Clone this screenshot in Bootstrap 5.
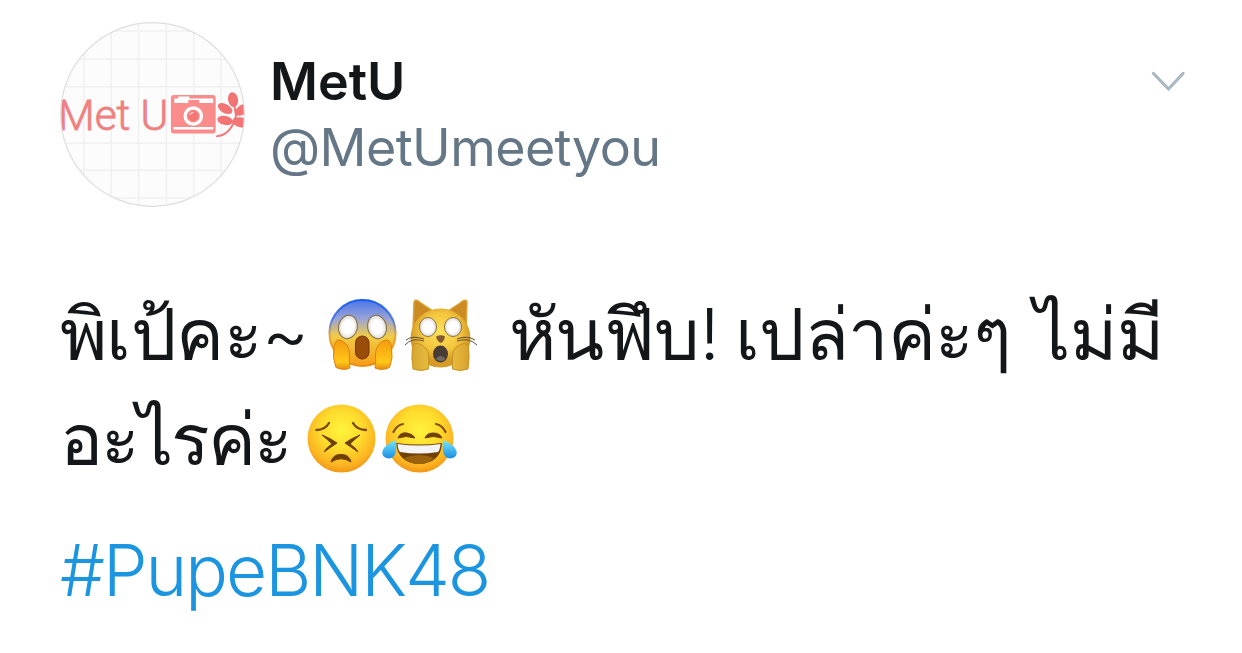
<!DOCTYPE html>
<html lang="th">
<head>
<meta charset="utf-8">
<meta name="viewport" content="width=device-width, initial-scale=1">
<title>MetU</title>
<link href="https://cdn.jsdelivr.net/npm/bootstrap@5.3.0/dist/css/bootstrap.min.css" rel="stylesheet">
<style>
body{font-family:Inter,"Liberation Sans",sans-serif;color:#14171a;background:#fff;overflow:hidden}
.tweet{padding:22px 57px 0 60px;height:653px}
.avatar{width:185px;height:185px;flex:none}
.who{padding:27px 0 0 25px;flex:1}
.display-name{font-size:52px;line-height:66px;font-weight:600;letter-spacing:0}
.handle{font-size:52px;line-height:66px;color:#657786;letter-spacing:-.6px}
.caret-icon{width:34px;height:22px;margin-top:49px}
.tweet-line{height:105px;line-height:105px;font-size:72px;white-space:nowrap}
.tweet-line > span{margin-top:-2px}
.message{padding-top:75px}
.w1{width:268px;letter-spacing:-.6px}.w2{width:226px;letter-spacing:-.6px}.w3{width:299px;letter-spacing:-.6px}.w4{letter-spacing:0}.w5{width:247px;letter-spacing:-2.3px}
.gap-after{margin-right:25px}
.emoji{width:78px;height:78px;flex:none;overflow:visible}
.hashtag{font-size:71px;line-height:90px;font-weight:300;color:#1b95e0;letter-spacing:-2px;margin-top:33px}
</style>
</head>
<body>
<article class="tweet">
<header class="d-flex align-items-start">
<svg class="avatar" viewBox="0 0 186 186" role="img" aria-label="MetU">
<defs><clipPath id="round"><circle cx="93" cy="93" r="92.5"/></clipPath></defs>
<g clip-path="url(#round)">
<rect width="186" height="186" fill="#fcfcfc"/>
<path d="M24 0V186M51.500 0V186M79 0V186M107 0V186M134.500 0V186M162 0V186M0 9H186M0 37.500H186M0 65H186M0 122H186M0 149H186M0 177H186" stroke="#f0f0f0" stroke-width="1.500" fill="none"/>
<text x="-2" y="109" font-family="Roboto,sans-serif" font-weight="300" font-size="43" textLength="111" lengthAdjust="spacingAndGlyphs" fill="#f08080" stroke="#f08080" stroke-width=".8">Met U</text>
<rect x="111.500" y="73.500" width="45" height="38.500" rx="3" fill="#fa8c8c"/>
<path d="M115 81.500v-4.500h4v-2h11v2h24v4.500h-14v-3h-11v3zM114 105.500h40v2.500h-40z" fill="#fff"/>
<circle cx="134" cy="94.500" r="8.200" fill="none" stroke="#fff" stroke-width="3.300"/><circle cx="134" cy="94.500" r="5" fill="#f67575"/><path d="M130.500 93.500q1-2.500 3.500-2.500" stroke="#fff" fill="none"/>
<path d="M157 115Q172 114 177 94L175 82" fill="none" stroke="#f17878" stroke-width="2"/>
<g fill="#f27474"><ellipse cx="174" cy="78" rx="5" ry="7.500" transform="rotate(-10 174 78)"/><ellipse cx="166" cy="87" rx="8" ry="4.500" transform="rotate(30 166 87)"/><ellipse cx="166" cy="99" rx="8" ry="4.500" transform="rotate(12 166 99)"/><ellipse cx="184" cy="88" rx="9" ry="5" transform="rotate(-30 184 88)"/><ellipse cx="182" cy="101" rx="9" ry="5" transform="rotate(12 182 101)"/></g>
</g>
<circle cx="93" cy="93" r="92.300" fill="none" stroke="#dedede" stroke-width="1.200"/>
</svg>
<div class="who"><div class="display-name">MetU</div><div class="handle">@MetUmeetyou</div></div>
<svg class="caret-icon" viewBox="0 0 34 22"><path d="M2.500 2.500 17.500 18 32 2.500" fill="none" stroke="#aab8c2" stroke-width="3.200" stroke-linecap="round"/></svg>
</header>
<div class="message">
<div class="tweet-line d-flex align-items-center">
<span class="w1">พิเป้คะ<span class="fw-light">~</span></span>
<svg class="emoji" viewBox="0 0 78 78" aria-label="😱">
<defs>
<linearGradient id="scream" x2="0" y2="1"><stop offset="0" stop-color="#4b76e8"/><stop offset=".28" stop-color="#98a2d8"/><stop offset=".55" stop-color="#f1cc48"/><stop offset="1" stop-color="#f79c15"/></linearGradient>
<linearGradient id="screamEdge" x2="0" y2="1"><stop offset="0" stop-color="#155cf2"/><stop offset=".32" stop-color="#5a82dd"/><stop offset=".55" stop-color="#eba930"/><stop offset="1" stop-color="#ed8a10"/></linearGradient>
<linearGradient id="hand" x2="0" y2="1"><stop offset="0" stop-color="#f39a10"/><stop offset=".75" stop-color="#ffc817"/><stop offset="1" stop-color="#e68a10"/></linearGradient>
<radialGradient id="eye"><stop offset=".55" stop-color="#fff"/><stop offset="1" stop-color="#dcdad8"/></radialGradient>
</defs>
<circle cx="34.500" cy="37" r="33" fill="url(#scream)" stroke="url(#screamEdge)" stroke-width="2.200"/>
<ellipse cx="20" cy="31" rx="9.400" ry="11.700" fill="url(#eye)" stroke="#806b38" stroke-width="1" transform="rotate(12 20 31)"/>
<ellipse cx="49" cy="31" rx="9.400" ry="11.700" fill="url(#eye)" stroke="#806b38" stroke-width="1" transform="rotate(-12 49 31)"/>
<rect x="27.500" y="40" width="13.500" height="23" rx="6.700" fill="#984e08" stroke="#733700"/>
<path d="M8 71.500Q4 62 6 51Q7 43 12 44Q21 47 21.500 58Q21 66 22 72Q16 75 8 71.500Z" fill="url(#hand)" stroke="#df830f"/>
<path d="M61.500 71.500Q65.500 62 63.500 51Q62.500 43 57.500 44Q48 47 47.500 58Q48 66 47 72Q54 75 61.500 71.500Z" fill="url(#hand)" stroke="#df830f"/>
</svg>
<svg class="emoji gap-after" viewBox="0 0 78 78" aria-label="🙀">
<defs><radialGradient id="cat" cx=".5" cy=".4"><stop offset="0" stop-color="#ffe35a"/><stop offset=".65" stop-color="#f3c53d"/><stop offset="1" stop-color="#d69b24"/></radialGradient>
<linearGradient id="paw"><stop offset="0" stop-color="#d5a62e"/><stop offset=".5" stop-color="#f4cc4f"/><stop offset="1" stop-color="#d7a12b"/></linearGradient></defs>
<path d="M7 33 8 6Q9 2 15 7L27 15ZM60 33 61 6Q60 2 54 7L42 15Z" fill="#cc8b22" stroke="#dda433" stroke-width="1.500"/>
<ellipse cx="34.500" cy="42" rx="30" ry="29.500" fill="url(#cat)"/>
<ellipse cx="22" cy="31" rx="8.500" ry="9.500" fill="url(#eye)" stroke="#8a7444"/><ellipse cx="47" cy="31" rx="8.500" ry="9.500" fill="url(#eye)" stroke="#8a7444"/>
<path d="M30 40.500Q35 38 39 40.500Q38 46 34.500 47Q31 45 30 40.500Z" fill="#855a32"/>
<ellipse cx="34.500" cy="58" rx="7.500" ry="8.500" fill="#493c35"/><path d="M29.500 63Q34.500 57 39.500 63Q36 67 29.500 63Z" fill="#706b67"/>
<path d="M7 73Q5 61 6.500 51Q8 46 13 48Q22 51 22.500 60V73Q15 76 7 73ZM62 73Q64 61 62.500 51Q61 46 56 48Q47 51 46.500 60V73Q54 76 62 73Z" fill="url(#paw)" stroke="#c89424"/>
<path d="M18 43Q7 39 0 44M18 45Q6 41-1 49M51 43Q61 39 69 44M51 45Q63 41 71 49" fill="none" stroke="#5c513d" stroke-width="1"/>
</svg>
<span class="w2">หันฟึบ<span class="fw-light">!</span></span><span class="w3">เปล่าค่ะๆ</span><span class="w4">ไม่มี</span>
</div>
<div class="tweet-line d-flex align-items-center">
<span class="w5">อะไรค่ะ</span>
<svg class="emoji" viewBox="0 0 78 78" aria-label="😣">
<defs><radialGradient id="face" cx=".5" cy=".38" r=".65"><stop offset="0" stop-color="#fff33b"/><stop offset=".45" stop-color="#ffdc2d"/><stop offset=".8" stop-color="#fbb321"/><stop offset="1" stop-color="#ed8e12"/></radialGradient></defs>
<circle cx="34.500" cy="37.500" r="34" fill="url(#face)"/>
<g fill="none" stroke="#7a4704" stroke-width="2.300" stroke-linecap="round" stroke-linejoin="round"><path d="M9.500 29Q18 29 22 22M59 29Q50 29 46 22"/></g>
<path d="M15 34Q23 37 30 42Q24 46 17 51Q19 47 25 43Q20 38 15 34ZM53 34Q45 37 38 42Q44 46 51 51Q49 47 43 43Q48 38 53 34ZM24 61Q26 53 34 53.500Q42 53 44 61Q34 54.500 24 61Z" fill="#704103" stroke="#704103" stroke-linejoin="round"/>
</svg>
<svg class="emoji" viewBox="0 0 78 78" aria-label="😂">
<defs><linearGradient id="tear" x2="0" y2="1"><stop offset="0" stop-color="#76e6ff"/><stop offset="1" stop-color="#188ee2"/></linearGradient></defs>
<circle cx="34.500" cy="37.500" r="34" fill="url(#face)"/>
<path d="M8.500 31Q12 24 18 23M60.500 31Q57 24 51 23" fill="none" stroke="#824b04" stroke-width="2.200" stroke-linecap="round"/>
<path d="M13 37Q15 31 22 32Q28 33 30 37Q21 34 13 37ZM40 37Q42 32 48 32Q55 32 57 37Q48 34 40 37Z" fill="#704103" stroke="#704103" stroke-linejoin="round"/>
<path d="M11 42Q34 45 57 42Q56 62 34 63Q13 62 11 42Z" fill="#704004"/><path d="M12.500 43Q34 46 55.500 43Q55 49 53 51Q34 54 15 51Q13 49 12.500 43Z" fill="#f4f4f7"/><path d="M19 57Q34 51 49 57Q44 63 34 63Q24 63 19 57Z" fill="#9b620d"/>
<path d="M11 39Q13 57 4 57.500Q-4 57-2.500 50Q-1 44 11 39ZM58 39Q56 57 65 57.500Q73 57 71.500 50Q70 44 58 39Z" fill="url(#tear)"/>
</svg>
</div>
<div class="hashtag">#PupeBNK48</div>
</div>
</article>
<script src="https://cdn.jsdelivr.net/npm/bootstrap@5.3.0/dist/js/bootstrap.bundle.min.js"></script>
</body>
</html>
